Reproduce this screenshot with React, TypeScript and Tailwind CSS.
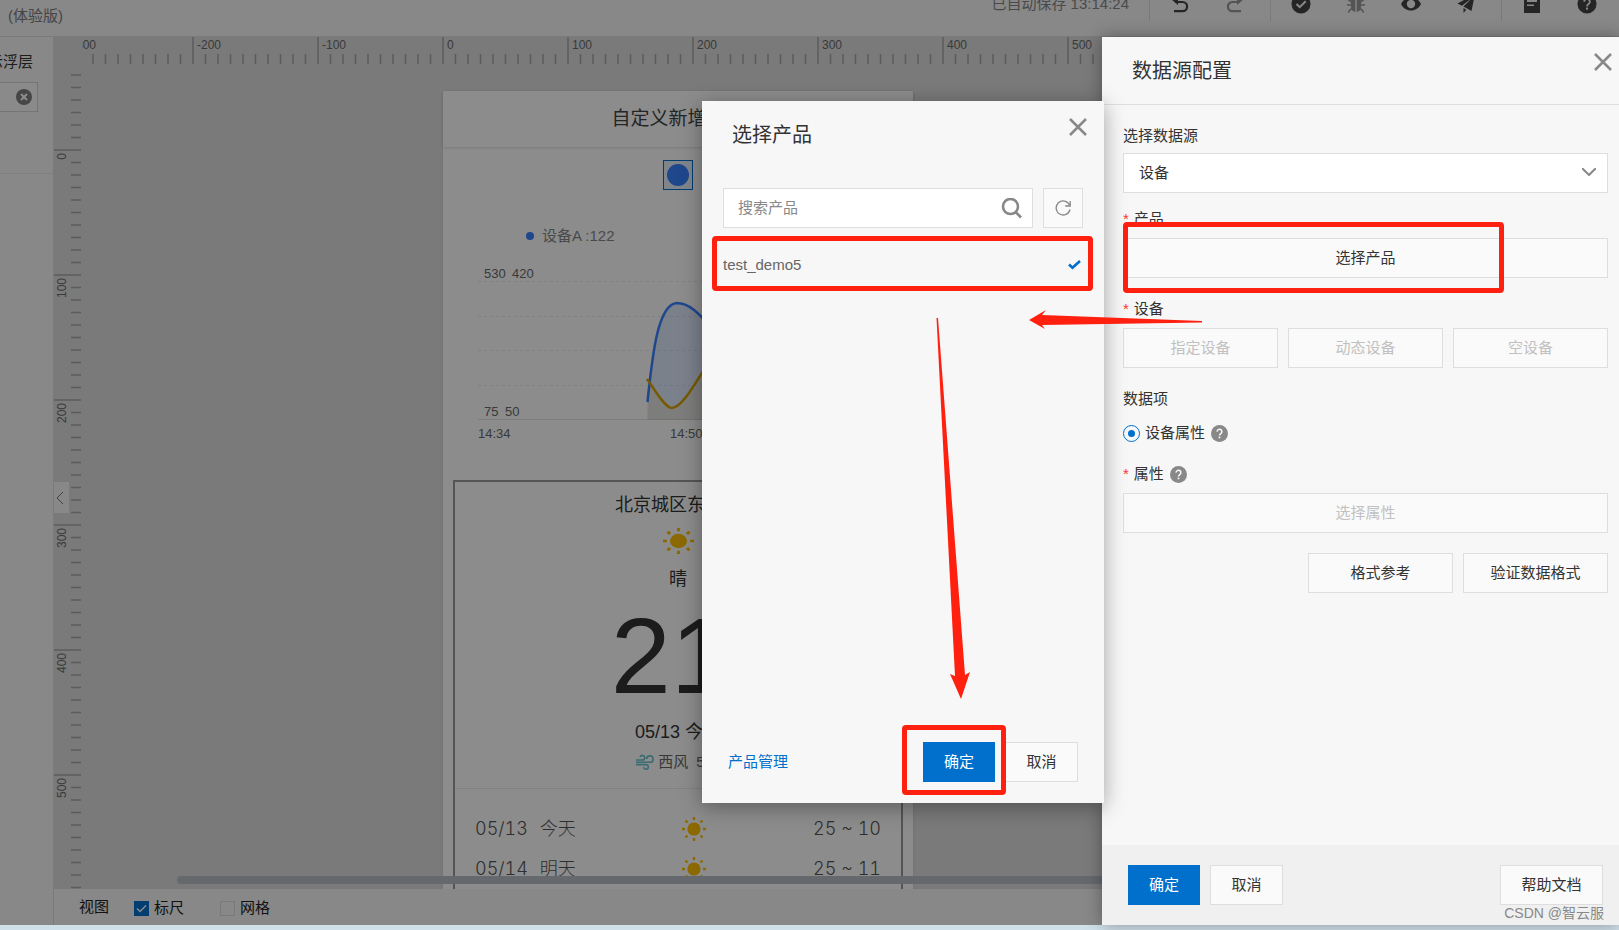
import React from 'react';
import clsx from 'clsx';

const RULER_STEP = 125;

function HelpIcon({ className }: { className?: string }) {
    return (
        <svg viewBox="0 0 20 20" className={className} fill="currentColor" aria-hidden="true">
            <circle cx="10" cy="10" r="10" />
            <path d="M7.2 7.8a2.8 2.8 0 1 1 4.3 2.3c-1 .7-1.5 1.1-1.5 2.3" fill="none" stroke="#f7f7f7" strokeWidth="1.8" />
            <rect x="9" y="13.6" width="2" height="2" fill="#f7f7f7" />
        </svg>
    );
}

function CloseIcon() {
    return (
        <svg viewBox="0 0 18 18" className="h-[18px] w-[18px]" stroke="#888" strokeWidth="2.5" aria-hidden="true">
            <path d="M1 1l16 16M17 1L1 17" />
        </svg>
    );
}

function SunIcon({ className }: { className?: string }) {
    return (
        <svg viewBox="0 0 24 24" preserveAspectRatio="none" className={className} aria-hidden="true">
            <circle cx="12" cy="12" r="6.6" fill="#ffc000" />
            <g stroke="#ffc000" strokeWidth="2.4">
                <path d="M12 0v3M12 21v3M0 12h3M21 12h3M3.5 3.5l2 2M18.5 18.5l2 2M3.5 20.5l2-2M18.5 5.5l2-2" />
            </g>
        </svg>
    );
}

function WindIcon() {
    return (
        <svg viewBox="0 0 18 16" className="h-4 w-[18px]" fill="none" stroke="#6bc4d0" strokeWidth="1.6" aria-hidden="true">
            <path d="M0 6h6.500a2.300 2.300 0 1 0-2.300-2.800M0 8.300h14a3.200 3.200 0 1 0-3.300-3.300M0 10.600h10a2.300 2.300 0 1 1-2.300 2.600" />
        </svg>
    );
}

function ToolIcon({ label, muted, children }: { label: string; muted?: boolean; children: React.ReactNode }) {
    return (
        <button type="button" aria-label={label} className={clsx('h-5 w-5', muted ? 'text-[#999]' : 'text-[#444]')}>
            <svg viewBox="0 0 20 20" className="h-5 w-5" fill="currentColor" aria-hidden="true">
                {children}
            </svg>
        </button>
    );
}

function TopBar() {
    return (
        <header className="flex h-[37px] shrink-0 items-start justify-between overflow-hidden border-b border-[#dedede] bg-[#f7f7f7]">
            <span className="pt-[6px] pl-2 text-[15px] leading-5 text-[#808080]">(体验版)</span>
            <div className="-mt-[13px] flex h-[34px] items-stretch">
                <span className="self-center pr-5 text-[15px] leading-5 text-[#888]">已自动保存 13:14:24</span>
                <div className="flex items-center gap-[35px] border-l border-[#dedede] pr-[25px] pl-5">
                    <ToolIcon label="撤销">
                        <path d="M5 8h7.500a4.600 4.600 0 0 1 0 9.200H4" fill="none" stroke="currentColor" strokeWidth="2.2" />
                        <path d="M1 5l7-4.500V11z" />
                    </ToolIcon>
                    <ToolIcon label="重做" muted>
                        <path d="M15 8H7.500a4.600 4.600 0 0 0 0 9.200H16" fill="none" stroke="currentColor" strokeWidth="2.200" />
                        <path d="M19 5l-7-4.500V11z" />
                    </ToolIcon>
                </div>
                <div className="flex items-center gap-[35px] border-l border-[#dedede] pr-[25px] pl-5">
                    <ToolIcon label="检查">
                        <circle cx="10" cy="10" r="9.500" />
                        <path d="M5.500 10l3.200 3.200 6-6" fill="none" stroke="#f7f7f7" strokeWidth="2" />
                    </ToolIcon>
                    <ToolIcon label="调试" muted>
                        <path d="M6 4a4 4 0 0 1 8 0zM5 6h4.300v12C6.500 17.500 5 15.500 5 13zM15 6h-4.300v12c2.800-.5 4.300-2.500 4.300-5z" />
                        <path d="M1.500 5l4 3M18.500 5l-4 3M1 11h5M19 11h-5M2.500 18.500c.5-2 1.500-3 3.500-4M17.500 18.500c-.5-2-1.500-3-3.500-4" fill="none" stroke="currentColor" strokeWidth="1.600" />
                    </ToolIcon>
                    <ToolIcon label="预览">
                        <path fillRule="evenodd" d="M0 10c2-4.200 5.700-6.500 10-6.500S18 5.800 20 10c-2 4.200-5.700 6.500-10 6.500S2 14.200 0 10zm10-4.200a4.200 4.200 0 1 0 0 8.400 4.200 4.200 0 0 0 0-8.400z" />
                    </ToolIcon>
                    <ToolIcon label="发布">
                        <path d="M19 0L1.500 9.500l4.500 2.200L16 4 7.500 12.600 15.500 17zM7.500 14v5l2.700-3.300z" />
                    </ToolIcon>
                </div>
                <div className="flex items-center gap-[35px] border-l border-[#dedede] pr-[22px] pl-5">
                    <ToolIcon label="文档">
                        <path fillRule="evenodd" d="M2 1h16v18H2zM5 6v2h10V6zM5 10.500v1.600h7v-1.600z" />
                    </ToolIcon>
                    <ToolIcon label="帮助">
                        <circle cx="10" cy="10" r="9.500" />
                        <path d="M7.200 7.800a2.800 2.800 0 1 1 4.300 2.300c-1 .7-1.500 1.100-1.500 2.300" fill="none" stroke="#f7f7f7" strokeWidth="1.800" />
                        <rect x="9" y="13.600" width="2" height="2" fill="#f7f7f7" />
                    </ToolIcon>
                </div>
            </div>
        </header>
    );
}

function SideBar() {
    return (
        <aside className="flex w-[54px] shrink-0 flex-col items-end overflow-hidden border-r border-[#dedede] bg-[#f7f7f7]">
            <label htmlFor="layer" className="mt-[15px] mr-5 text-[15px] leading-5 whitespace-nowrap text-[#333]">
                显示浮层
            </label>
            <div className="mt-[10px] mr-[15px] flex h-[30px] w-[180px] items-center border border-[#d5d5d5] bg-[#fcfcfc] pr-[5px]">
                <input id="layer" className="min-w-0 flex-1 bg-transparent outline-none" />
                <svg viewBox="0 0 16 16" className="h-4 w-4" aria-hidden="true">
                    <circle cx="8" cy="8" r="8" fill="#808080" />
                    <path d="M5 5l6 6M11 5l-6 6" stroke="#fff" strokeWidth="2" />
                </svg>
            </div>
            <hr className="mt-[61px] w-full border-[#e8e8e8]" />
        </aside>
    );
}

// one major tick every 100 units, ten minor ticks between
function Ruler({ vertical, origin }: { vertical?: boolean; origin: number }) {
    const majors = [-3, -2, -1, 0, 1, 2, 3, 4, 5, 6, 7, 8, 9, 10];
    const ticks = majors.flatMap((m) => [0, 1, 2, 3, 4, 5, 6, 7, 8, 9].map((i) => ({ major: i === 0, at: origin + m * RULER_STEP + i * RULER_STEP / 10 })));

    return (
        <svg className="h-full w-full overflow-hidden" aria-hidden="true">
            <g stroke="#a6a6a6" strokeWidth="1.5">
                {ticks.map((t) => vertical
                    ? <line key={t.at} x1={t.major ? 0 : 17} x2="27" y1={t.at} y2={t.at} />
                    : <line key={t.at} y1={t.major ? 0 : 17} y2="27" x1={t.at} x2={t.at} />
                )}
            </g>
            <g fill="#6a6a6a" fontSize="12">
                {majors.map((m) => {
                    const at = origin + m * RULER_STEP;
                    return vertical
                        ? <text key={m} textAnchor="end" transform={`translate(12 ${at + 3}) rotate(-90)`}>{m * 100}</text>
                        : <text key={m} x={at + 4} y="12">{m * 100}</text>;
                })}
            </g>
        </svg>
    );
}

function LineChart() {
    return (
        <svg viewBox="0 0 469 200" className="mt-1 h-[200px] w-[469px]" aria-hidden="true">
            <g stroke="#ebebeb" strokeDasharray="3 3">
                <path d="M35 31.500h415M35 66.500h415M35 100.500h415M35 135.500h415" />
            </g>
            <path d="M35 169.500h415" stroke="#e3e3e3" />
            <path d="M204.500 152C209 110 216 54 233 53C250 53 262 72 275 84L330 120V170H204.500z" fill="#5b8ff9" fillOpacity="0.18" />
            <path d="M204.500 129C212 140 222 158 229 158C238 158 250 137 262 118L330 60V170H204.500z" fill="#f6bd16" fillOpacity="0.12" />
            <path d="M204.500 152C209 110 214 54 234 53C250 53 262 72 275 84L330 120" fill="none" stroke="#3881ff" strokeWidth="2.5" />
            <path d="M204 129C212 140 222 158 229 158C238 158 250 137 262 118L330 60" fill="none" stroke="#d8a400" strokeWidth="2.5" />
            <g fill="#6a6a6a" fontSize="13">
                <text x="41" y="28">530</text>
                <text x="69" y="28">420</text>
                <text x="41" y="166">75</text>
                <text x="62" y="166">50</text>
                <text x="35" y="188">14:34</text>
                <text x="227" y="188">14:50</text>
            </g>
        </svg>
    );
}

const FORECAST = [
    { date: '05/13', day: '今天', temp: '25 ~ 10' },
    { date: '05/14', day: '明天', temp: '25 ~ 11' },
];

function WeatherCard() {
    return (
        <section className="mt-[30px] mr-[10px] ml-[10px] flex flex-1 flex-col border-2 border-[#9c9c9c] text-[#333]">
            <div className="flex flex-col items-center">
                <h3 className="mt-[10px] text-lg leading-[26px]">北京城区东城区</h3>
                <SunIcon className="mt-[10px] h-[26px] w-[31px]" />
                <span className="mt-3 text-lg leading-[26px]">晴</span>
                <div className="mt-[10px] flex items-start text-[108px] leading-[108px]">
                    21<span className="text-[36px] leading-[48px]">°</span>
                </div>
                <span className="mt-[9px] text-lg leading-[26px]">05/13 今天</span>
                <div className="mt-[7px] flex items-center gap-1 text-[15px] leading-5 text-[#666]">
                    <WindIcon />
                    <span>西风</span>
                    <span className="ml-1">5级</span>
                </div>
            </div>
            <hr className="mt-4 border-[#ebebeb]" />
            <ul className="pt-5 font-['Inter','Noto_Sans_CJK_SC',sans-serif] text-lg font-light text-[#555] tabular-nums">
                {FORECAST.map((f) => (
                    <li key={f.date} className="flex h-10 items-center justify-between px-5">
                        <span className="flex gap-3"><span>{f.date}</span><span>{f.day}</span></span>
                        <SunIcon className="h-6 w-6" />
                        <span>{f.temp}</span>
                    </li>
                ))}
            </ul>
        </section>
    );
}

function Workspace() {
    return (
        <main className="flex min-w-0 flex-1 flex-col">
            <div className="relative flex min-h-0 flex-1 flex-col overflow-hidden bg-[#dedede]">
                <div className="ml-7 h-[27px] shrink-0">
                    <Ruler origin={361} />
                </div>
                <div className="flex min-h-0 flex-1">
                    <div className="mt-[6px] w-7 shrink-0">
                        <Ruler vertical origin={80} />
                    </div>
                    <div className="min-w-0 flex-1 overflow-hidden pt-[27px] pl-[361px]">
                        <article className="flex min-h-[820px] w-[470px] flex-col bg-white shadow">
                            <h2 className="flex h-14 shrink-0 items-center justify-center text-[19px] text-[#444] shadow">自定义新增页面</h2>
                            <div className="mt-[13px] flex h-[30px] w-[30px] shrink-0 items-center justify-center self-center border border-[#0070cc] bg-[#eaf2ff]">
                                <span className="h-[22px] w-[22px] rounded-full bg-[#3881ff]" />
                            </div>
                            <div className="mt-9 flex items-center gap-2 pl-[83px] text-[15px] leading-5 text-[#888]">
                                <span className="h-2 w-2 rounded-full bg-[#3881ff]" />
                                设备A :122
                            </div>
                            <LineChart />
                            <WeatherCard />
                        </article>
                    </div>
                </div>
                <button type="button" aria-label="收起" className="absolute top-[445px] left-0 flex h-[31px] w-[15px] items-center bg-[#f7f7f7] pl-[2px]">
                    <svg viewBox="0 0 8 12" className="h-3 w-2" fill="none" stroke="#777" aria-hidden="true"><path d="M7 0L1 6l6 6" /></svg>
                </button>
                <div className="absolute right-0 bottom-[5px] left-[123px] h-2 rounded-full bg-[#b9c0c9]" />
            </div>
            <footer className="flex h-9 shrink-0 items-center bg-[#f7f7f7] pl-[25px] text-[15px] leading-5 text-[#222]">
                <span>视图</span>
                <label className="mt-[2px] ml-[25px] flex items-center gap-[5px]">
                    <span className="relative flex">
                        <input type="checkbox" defaultChecked className="h-[15px] w-[15px] appearance-none bg-[#0070cc]" />
                        <svg viewBox="0 0 15 15" className="pointer-events-none absolute inset-0" fill="none" stroke="#fff" strokeWidth="1.500" aria-hidden="true"><path d="M3 7.500l3 3 6-6" /></svg>
                    </span>
                    标尺
                </label>
                <label className="mt-[2px] ml-9 flex items-center gap-[5px]">
                    <input type="checkbox" className="h-[15px] w-[15px] appearance-none border border-[#ddd]" />
                    网格
                </label>
            </footer>
        </main>
    );
}

function Button({ primary, className, children, ...rest }: React.ButtonHTMLAttributes<HTMLButtonElement> & { primary?: boolean }) {
    return (
        <button
            type="button"
            className={clsx(
                'h-10 border text-[15px] leading-5 whitespace-nowrap disabled:text-[#c1c1c1]',
                primary ? 'border-[#0070cc] bg-[#0070cc] text-white' : 'border-[#dedede] bg-[#fafafa] text-[#333]',
                className
            )}
            {...rest}
        >
            {children}
        </button>
    );
}

function Required() {
    return <span className="mr-[5px] text-[#ff3333]">*</span>;
}

function HighlightBox({ className }: { className: string }) {
    return <div className={clsx('pointer-events-none absolute rounded border-5 border-[#ff2010]', className)} />;
}

function DataSourceDrawer() {
    return (
        <section className="absolute top-[37px] right-0 bottom-[5px] flex w-[517px] flex-col bg-[#f7f7f7] text-[15px] leading-5 text-[#333] shadow-[0_0_16px_rgba(0,0,0,0.35)]">
            <header className="flex h-[68px] shrink-0 items-start justify-between border-b border-[#dedede] pr-[7px] pl-[30px]">
                <h2 className="mt-5 text-xl leading-7">数据源配置</h2>
                <button type="button" aria-label="关闭" className="mt-4"><CloseIcon /></button>
            </header>
            <div className="flex flex-1 flex-col pt-[21px] pr-[11px] pl-[21px]">
                <label htmlFor="source" className="mb-[7px]">选择数据源</label>
                <div className="relative">
                    <select id="source" className="h-10 w-full appearance-none border border-[#dedede] bg-white px-[15px]">
                        <option>设备</option>
                    </select>
                    <svg viewBox="0 0 14 8" className="pointer-events-none absolute top-[15px] right-3 h-2 w-[14px]" fill="none" stroke="#888" strokeWidth="2" aria-hidden="true"><path d="M0 0l7 7 7-7" /></svg>
                </div>

                <div className="mt-4 mb-[9px]"><Required />产品</div>
                <div className="relative">
                    <Button className="w-full">选择产品</Button>
                    <HighlightBox className="-top-4 left-0 h-[71px] w-[381px]" />
                </div>

                <div className="mt-[21px] mb-[9px]"><Required />设备</div>
                <div className="grid grid-cols-3 gap-[10px]">
                    <Button disabled>指定设备</Button>
                    <Button disabled>动态设备</Button>
                    <Button disabled>空设备</Button>
                </div>

                <div className="mt-[21px]">数据项</div>
                <div className="mt-[14px] flex items-center">
                    <label className="flex items-center gap-[5px]">
                        <input type="radio" name="item" defaultChecked className="h-[17px] w-[17px] appearance-none rounded-full border border-[#0070cc] bg-[#0070cc] bg-clip-content p-1" />
                        设备属性
                    </label>
                    <HelpIcon className="ml-[6px] h-[17px] w-[17px] text-[#888]" />
                </div>

                <div className="mt-[21px] mb-[9px] flex items-center">
                    <Required />属性
                    <HelpIcon className="ml-[6px] h-[17px] w-[17px] text-[#888]" />
                </div>
                <Button disabled>选择属性</Button>

                <div className="mt-5 flex justify-end gap-[10px]">
                    <Button className="w-[145px]">格式参考</Button>
                    <Button className="w-[145px]">验证数据格式</Button>
                </div>
            </div>
            <footer className="relative flex h-20 shrink-0 items-center gap-[10px] bg-[#f0f0f0] pr-4 pl-[26px]">
                <Button primary className="w-[72px]">确定</Button>
                <Button className="w-[73px]">取消</Button>
                <Button className="ml-auto w-[103px]">帮助文档</Button>
                <span className="absolute right-[15px] bottom-[2px] text-sm leading-5 text-[#888]">CSDN @智云服</span>
            </footer>
        </section>
    );
}

function ProductDialog() {
    return (
        <section role="dialog" aria-label="选择产品" className="absolute top-[101px] right-[515px] bottom-[127px] flex w-[402px] flex-col bg-[#f7f7f7] text-[15px] leading-5 text-[#333] shadow-[0_4px_20px_rgba(0,0,0,0.35)]">
            <header className="flex items-start justify-between pr-[17px] pl-[30px]">
                <h2 className="mt-5 text-xl leading-7">选择产品</h2>
                <button type="button" aria-label="关闭" className="mt-[17px]"><CloseIcon /></button>
            </header>
            <div className="mt-[39px] flex gap-[10px] pr-[21px] pl-[21px]">
                <div className="flex h-10 flex-1 items-center border border-[#dedede] bg-white pr-[10px] pl-[14px]">
                    <input aria-label="搜索产品" placeholder="搜索产品" className="min-w-0 flex-1 outline-none placeholder:text-[#888]" />
                    <svg viewBox="0 0 21 21" className="h-[21px] w-[21px]" fill="none" stroke="#888" strokeWidth="2.600" aria-hidden="true">
                        <circle cx="9.500" cy="8.500" r="7.500" />
                        <path d="M14.500 14l5.500 5.500" />
                    </svg>
                </div>
                <Button aria-label="刷新" className="flex w-10 items-center justify-center">
                    <svg viewBox="0 0 16 16" className="h-4 w-4" fill="none" stroke="#888" strokeWidth="1.300" aria-hidden="true">
                        <path d="M14.500 5A7 7 0 1 0 15 9.500M15.200 1v5h-5" />
                    </svg>
                </Button>
            </div>
            <ul className="relative mt-2 px-[10px]">
                <li className="flex h-[55px] items-center justify-between pt-[3px] pr-[13px] pl-[11px] text-[#666]">
                    test_demo5
                    <svg viewBox="0 0 13 10" className="h-[10px] w-[13px]" fill="none" stroke="#0070cc" strokeWidth="2.600" aria-hidden="true"><path d="M1 4.500l3.500 3.300L12 1" /></svg>
                </li>
                <HighlightBox className="top-0 left-[10px] h-[55px] w-[381px]" />
            </ul>
            <footer className="mt-auto mb-[21px] flex h-10 items-center pr-[26px] pl-[26px]">
                <a href="#products" className="text-[#0070cc]">产品管理</a>
                <div className="relative ml-auto flex gap-[10px]">
                    <Button primary className="w-[72px]">确定</Button>
                    <Button className="w-[73px]">取消</Button>
                    <HighlightBox className="-top-[17px] -left-[21px] h-[70px] w-[104px]" />
                </div>
            </footer>
            <svg viewBox="0 0 402 702" className="pointer-events-none absolute top-0 left-0 h-[702px] w-[402px] overflow-visible" fill="#ff2010" aria-hidden="true">
                <path d="M327 219l17-10-4 5 160 6v1.500l-160 2.500 3 4z" />
                <path d="M234.500 217h1.500L263 574l5-3-9 27-11-25 5 2z" />
            </svg>
        </section>
    );
}

export default function App() {
    return (
        <div className="relative flex h-screen min-h-[700px] flex-col overflow-hidden font-['Liberation_Sans','Noto_Sans_CJK_SC',sans-serif]">
            <TopBar />
            <div className="flex min-h-0 flex-1">
                <SideBar />
                <Workspace />
            </div>
            <div className="h-[5px] shrink-0 bg-[#d0e0ea]" />
            <div className="absolute inset-x-0 top-0 bottom-[5px] bg-black/45" />
            <DataSourceDrawer />
            <ProductDialog />
        </div>
    );
}
